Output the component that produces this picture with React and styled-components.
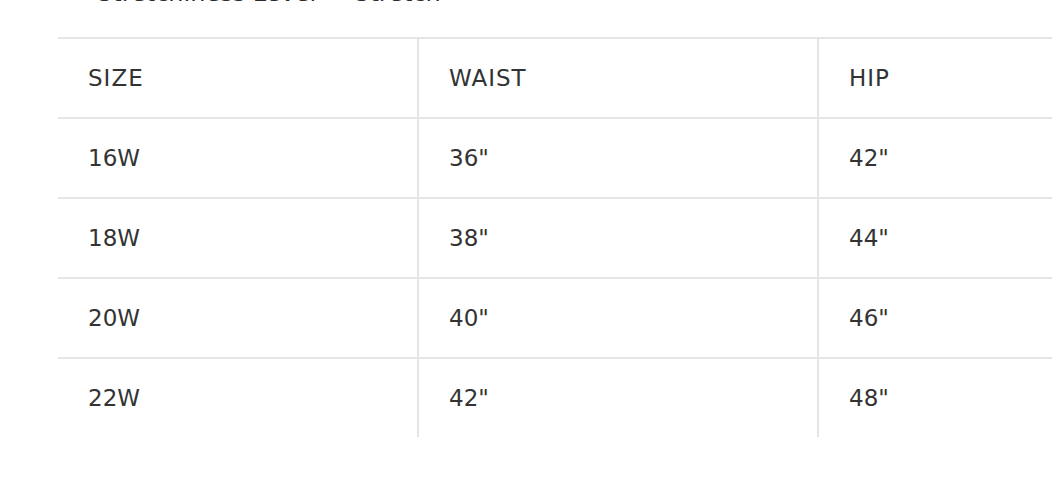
import React from "react";
import styled, { createGlobalStyle } from "styled-components";

const rows = [
  ["16W", '36"', '42"'],
  ["18W", '38"', '44"'],
  ["20W", '40"', '46"'],
  ["22W", '42"', '48"'],
];

const App = () => {
  return (
    <Page>
      <GlobalStyle />
      <Spec>
        <SpecLabel>Stretchiness Level</SpecLabel>
        <SpecValue>Stretch</SpecValue>
      </Spec>
      <Table>
        <Row>
          <Cell $head>SIZE</Cell>
          <Cell $head>WAIST</Cell>
          <Cell $head>HIP</Cell>
        </Row>
        {rows.map((r) => (
          <Row key={r[0]}>
            {r.map((v, i) => (
              <Cell key={i}>{v}</Cell>
            ))}
          </Row>
        ))}
      </Table>
    </Page>
  );
};

export default App;

const GlobalStyle = createGlobalStyle`
  body {
    margin: 0;
    background: #fff;
    overflow: hidden;
  }
`;

const Page = styled.div`
  width: 1052px;
  height: 504px;
  overflow: hidden;
  padding-left: 58px;
  box-sizing: border-box;
  font-family: "DejaVu Sans", sans-serif;
  color: #333;
`;

const Spec = styled.div`
  display: flex;
  gap: 38px;
  margin-top: -20px;
  padding-left: 39px;
  height: 26px;
  font-size: 24px;
  line-height: 26px;
  color: #2b2b2b;
`;

const SpecLabel = styled.span``;

const SpecValue = styled.span``;

const Table = styled.div`
  margin-top: 31px;
  width: 1160px;
`;

const Row = styled.div`
  display: grid;
  grid-template-columns: 359px 400px 400px;
  height: 80px;
  box-sizing: border-box;
  border-top: 2px solid #e5e5e5;
`;

const Cell = styled.div`
  display: flex;
  align-items: center;
  padding-left: 30px;
  font-size: 23px;
  letter-spacing: ${(p) => (p.$head ? "1px" : "0")};
  box-sizing: border-box;

  & + & {
    border-left: 2px solid #e5e5e5;
  }
`;
